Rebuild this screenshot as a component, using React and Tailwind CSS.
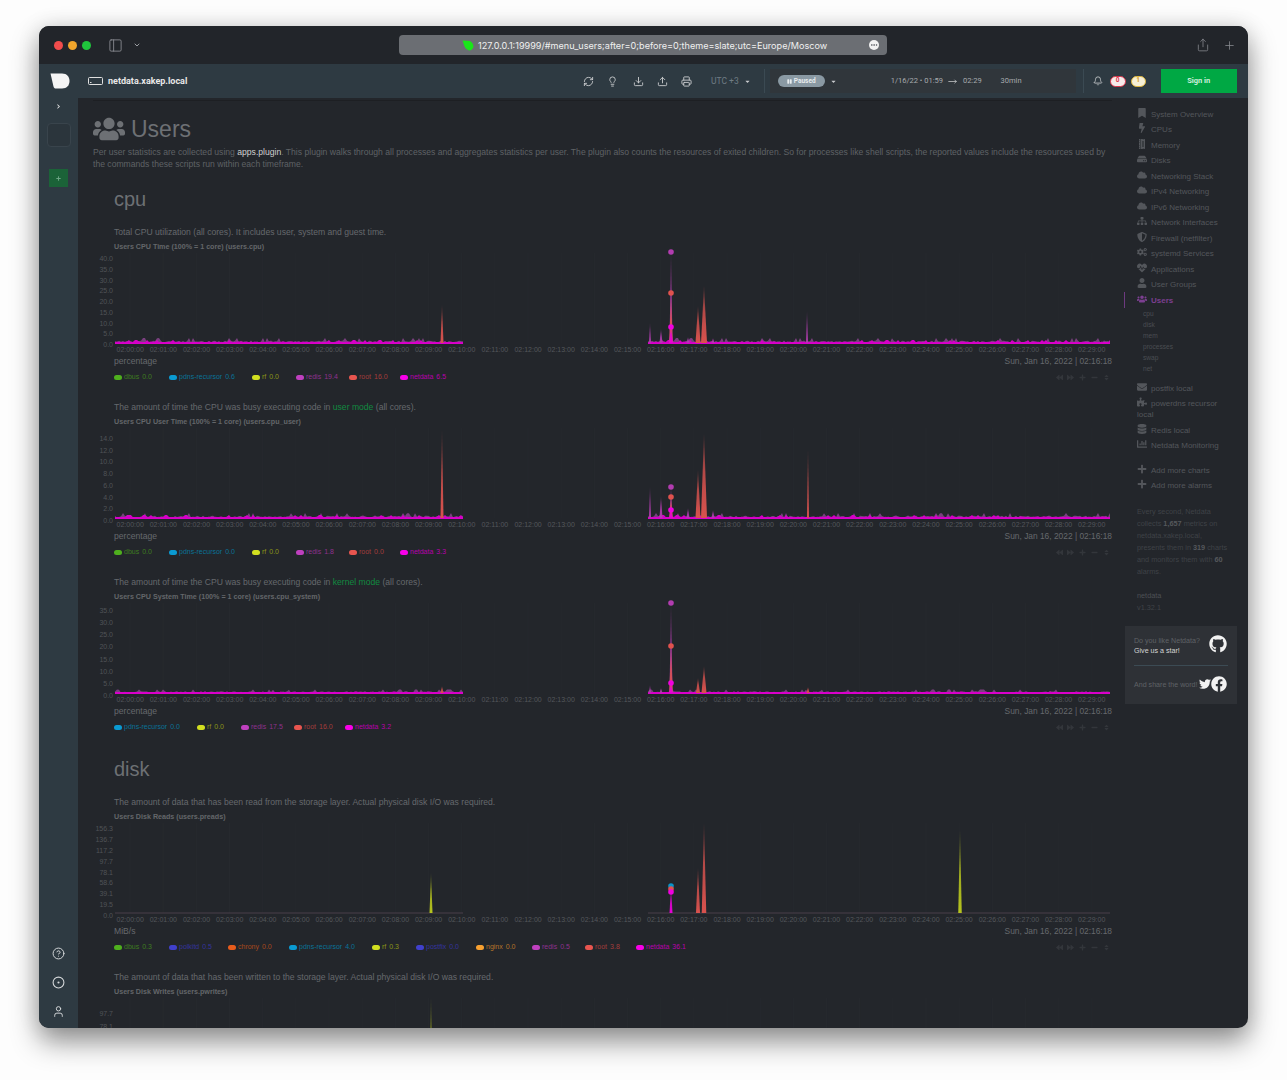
import React from "react";
import { PanelLeft, ChevronDown, Share, Plus, RefreshCw, Lightbulb, Download, Upload, Printer, Bell, MoveRight, CircleHelp, CircleDot, User, Ellipsis } from "lucide-react";
import { FaBookmark, FaBolt, FaMemory, FaHdd, FaCloud, FaSitemap, FaShieldAlt, FaCogs, FaHeartbeat, FaUser, FaUsers, FaEnvelope, FaPuzzlePiece, FaDatabase, FaChartBar, FaPlus, FaMinus, FaGithub, FaTwitter, FaFacebook, FaBackward, FaForward, FaSort, FaPause, FaCaretDown, FaChevronRight } from "react-icons/fa";

const L = {
  dbus: ["#4fb01e", "#3f7d20", 55],
  pdns: ["#0a9ad2", "#0a7298", 83],
  rf: ["#d2df20", "#8c9518", 44],
  redis: ["#bf40bf", "#8f318f", 53],
  root: ["#e8554f", "#a33d3b", 51],
  netdata: ["#f800e8", "#b800ac", 60],
  polkitd: ["#4040cc", "#34349f", 59],
  chrony: ["#e85c1c", "#a8481c", 61],
  postfix: ["#4040cc", "#34349f", 60],
  nginx: ["#f8a030", "#b5742a", 56],
};
const NAME = { pdns: "pdns-recursor" };
const TIMES = Array.from({ length: 30 }, (_, i) => `02:${String(i).padStart(2, "0")}:00`);
const GRAD = { r: "#d9524e", p: "#b23cb0", y: "#b6c41e", m: "#e800d8" };

function noisePath(seed, x0, x1, base, amp) {
  let s = seed;
  const pts = [`${x0},${base}`];
  for (let x = x0; x <= x1; x += 2) {
    s = (s * 1103515245 + 12345) & 0x7fffffff;
    const r = (s >> 8) % 100;
    const h = 0.8 + (r / 100) * amp + (r > 88 ? amp : 0);
    pts.push(`${x},${(base - h).toFixed(1)}`);
  }
  pts.push(`${x1},${base}`);
  return pts.join(" ");
}

function Plot({ id, top, base, amp, spikes, dots, height = 92 }) {
  const b = base - top;
  return (
    <svg width="995" height={height} viewBox={`0 0 995 ${height}`} className="block shrink-0 overflow-visible">
      <defs>
        {Object.entries(GRAD).map(([k, c]) => (
          <linearGradient key={k} id={`${id}${k}`} x1="0" y1="0" x2="0" y2="1">
            <stop offset="0" stopColor={c} stopOpacity="0.25" />
            <stop offset="0.45" stopColor={c} stopOpacity="0.8" />
            <stop offset="1" stopColor={c} stopOpacity="1" />
          </linearGradient>
        ))}
      </defs>
      {TIMES.map((_, i) => (
        <line key={i} x1={15 + i * 33.17} x2={15 + i * 33.17} y1="0" y2={b} stroke="#26292e" strokeWidth="1" />
      ))}
      {amp > 0.2 ? (
        <>
          <polygon points={noisePath(id.length * 97 + top, 0, 348, b + 0.5, amp + 1)} fill="#7a3f7f" />
          <polygon points={noisePath(id.length * 97 + top, 533, 995, b + 0.5, amp + 1)} fill="#7a3f7f" />
        </>
      ) : null}
      <line x1="0" x2="348" y1={b} y2={b} stroke={amp > 0.2 ? "#e000d0" : "#4b3f4b"} strokeWidth={amp > 0.2 ? 2 : 1} />
      <line x1="533" x2="995" y1={b} y2={b} stroke={amp > 0.2 ? "#e000d0" : "#4b3f4b"} strokeWidth={amp > 0.2 ? 2 : 1} />
      {amp > 0.2 ? (
        <>
          <polygon points={noisePath(top * 3 + 11, 0, 348, b + 0.5, amp)} fill="#d400c6" />
          <polygon points={noisePath(top * 3 + 11, 533, 995, b + 0.5, amp)} fill="#d400c6" />
        </>
      ) : null}
      {spikes.map(([x, t, w, c], i) => (
        <polygon key={i} points={`${x - 115 - w / 2},${b} ${x - 115},${t - top} ${x - 115 + w / 2},${b}`} fill={`url(#${id}${c})`} />
      ))}
      {dots.map(([x, y, c], i) => (
        <circle key={i} cx={x - 115} cy={y - top} r="2.8" fill={c} />
      ))}
    </svg>
  );
}

function Chart({ id, desc, title, labels, first, step, unit, legend, base, amp, spikes, dots = [], plotH = 92, cut }) {
  return (
    <section className="h-[175px] w-[998px] shrink-0 flex flex-col">
      <p className="h-[12px] leading-[12px] text-[8.6px] text-[#66696d] whitespace-nowrap">{desc}</p>
      <h4 className="mt-[4px] h-[11px] leading-[11px] text-[7.15px] font-bold text-[#63666a] whitespace-nowrap">{title}</h4>
      <div className="flex shrink-0 -ml-[19px]">
        <div className="w-[18px] mr-[2px] shrink-0 text-right text-[7px] text-[#505357]" style={{ paddingTop: first - 4, height: plotH }}>
          {labels.map((t) => (
            <div key={t} className="leading-[10px]" style={{ height: step }}>{t}</div>
          ))}
        </div>
        <div className="relative">
          <Plot id={id} top={spikes.top} base={base} amp={amp} spikes={spikes.list} dots={dots} height={plotH} />
        </div>
      </div>
      {cut ? null : (
        <>
          <div className="flex h-[10px] shrink-0 -ml-[0.4px]">
            {TIMES.map((t) => (
              <span key={t} className="w-[33.17px] shrink-0 text-center leading-[10px] text-[7px] text-[#54575b] whitespace-nowrap">{t}</span>
            ))}
          </div>
          <div className="flex justify-between h-[11px] leading-[13px] text-[#66696d]">
            <span className="text-[8.6px]">{unit}</span>
            <span className="text-[8.4px]">Sun, Jan 16, 2022 | 02:16:18</span>
          </div>
          <div className="mt-[6px] h-[10px] flex items-center justify-between pr-[2px]">
            <div className="flex items-center">
              {legend.map(([k, v]) => (
                <span key={k} className="flex items-center text-[7px] leading-[10px] whitespace-nowrap" style={{ width: L[k][2] }}>
                  <span className="w-[8px] h-[5px] rounded-full mr-[2px]" style={{ backgroundColor: L[k][0] }} />
                  <span style={{ color: L[k][1] }}>{NAME[k] || k}</span>
                  <span className="ml-[3px]" style={{ color: L[k][1] }}>{v}</span>
                </span>
              ))}
            </div>
            <div className="flex items-center gap-[4px] text-[#33363b] text-[7px]">
              <FaBackward /><FaForward /><FaPlus className="ml-[1px]" /><FaMinus className="ml-[1px]" /><FaSort className="ml-[1px]" />
            </div>
          </div>
        </>
      )}
    </section>
  );
}

const NAV = [
  [FaBookmark, "System Overview"], [FaBolt, "CPUs"], [FaMemory, "Memory", "rotate-90"], [FaHdd, "Disks"],
  [FaCloud, "Networking Stack"], [FaCloud, "IPv4 Networking"], [FaCloud, "IPv6 Networking"], [FaSitemap, "Network Interfaces"],
  [FaShieldAlt, "Firewall (netfilter)"], [FaCogs, "systemd Services"], [FaHeartbeat, "Applications"], [FaUser, "User Groups"],
];

function NavItem({ Icon, text, cls = "" }) {
  return (
    <div className="leading-[11px] py-[1.75px] pl-[13px] pr-[8px]">
      <span className="inline-block w-[14px] align-[-1px]"><Icon className={`text-[10px] text-[#53565b] ${cls}`} /></span>
      {text}
    </div>
  );
}

export default function App() {
  return (
    <div className="h-[1080px] w-[1287px] overflow-hidden bg-[#fdfdfd] pt-[26px] pl-[39px] font-['Liberation_Sans',sans-serif]">
      <div className="w-[1209px] h-[1002px] rounded-[10px] overflow-hidden flex flex-col bg-[#23262b] shadow-[0_14px_28px_rgba(0,0,0,0.42),0_0_22px_rgba(0,0,0,0.12)]">
        {/* title bar */}
        <div className="h-[38px] shrink-0 bg-[#22252a] flex items-center relative">
          <span className="ml-[15px] w-[9px] h-[9px] rounded-full bg-[#f14c4c]" />
          <span className="ml-[5px] w-[9px] h-[9px] rounded-full bg-[#f0a52c]" />
          <span className="ml-[5px] w-[9px] h-[9px] rounded-full bg-[#1fc63c]" />
          <PanelLeft className="ml-[17px] text-[#8b8e92]" size={15} strokeWidth={1.4} />
          <ChevronDown className="ml-[10px] text-[#9a9da1]" size={8} strokeWidth={3} />
          <div className="ml-[258px] w-[488px] h-[20px] rounded-[4px] bg-[#6b6e73] flex items-center">
            <svg width="12" height="11" viewBox="0 0 12 11" className="ml-[63px]">
              <path d="M0.5 0.5 L8 1 Q11.5 3 11.5 7 Q10 10.5 7 10.5 Q3 9 2 5 Z" fill="#19e619" />
            </svg>
            <span className="ml-[4px] pt-[1px] text-[9.1px] text-[#f0f0f0] font-['Inter',sans-serif] whitespace-nowrap">127.0.0.1:19999/#menu_users;after=0;before=0;theme=slate;utc=Europe/Moscow</span>
            <span className="ml-auto mr-[8px] w-[10px] h-[10px] rounded-full bg-[#f2f2f2] flex items-center justify-center">
              <Ellipsis size={8} strokeWidth={3} className="text-[#6b6e73]" />
            </span>
          </div>
          <Share className="ml-[309px] text-[#8b8e92]" size={14} strokeWidth={1.3} />
          <Plus className="ml-[13px] text-[#8b8e92]" size={13} strokeWidth={1.4} />
        </div>

        {/* header */}
        <div className="h-[34px] shrink-0 bg-[#2e3a42] flex items-center font-['Roboto',sans-serif]">
          <div className="w-[537px] flex items-center shrink-0">
            <svg width="20" height="16" viewBox="0 0 20 16" className="ml-[11px] shrink-0">
              <path d="M0.5 0.5 H12 C17 0.5 19.5 4 19.5 8 C19.5 12 17 15.5 12 15.5 H6 C4.5 15.5 4 15 3.5 13.5 Z" fill="#f5f5f5" />
            </svg>
            <svg width="15" height="8" viewBox="0 0 15 8" fill="none" className="ml-[18px] shrink-0">
              <rect x="0.5" y="0.5" width="14" height="7" rx="1" stroke="#e0e0e0" />
              <rect x="2" y="5" width="1.5" height="1" fill="#e0e0e0" />
            </svg>
            <span className="ml-[5px] pt-[1px] text-[9px] font-bold text-[#e8e8e8] whitespace-nowrap">netdata.xakep.local</span>
          </div>
          <div className="flex items-center text-[#c9ccce]">
            <span className="w-[24px] flex justify-center"><RefreshCw size={11} strokeWidth={2} /></span>
            <span className="w-[24px] flex justify-center"><Lightbulb size={11} strokeWidth={2} /></span>
            <span className="ml-[2px] w-[24px] flex justify-center"><Download size={11} strokeWidth={2} /></span>
            <span className="w-[24px] flex justify-center"><Upload size={11} strokeWidth={2} /></span>
            <span className="w-[24px] flex justify-center"><Printer size={11} strokeWidth={2} /></span>
          </div>
          <span className="ml-[13px] text-[8.5px] text-[#6f7c84] whitespace-nowrap">UTC +3</span>
          <FaCaretDown className="ml-[5px] text-[7px] text-[#c9ccce]" />
          <span className="ml-[13px] w-px h-[24px] bg-[#3b4a53]" />
          <div className="ml-[5px] w-[306px] h-[24px] bg-[#30363b] flex items-center shrink-0">
            <span className="ml-[8px] w-[47px] h-[12px] rounded-full bg-[#8a99a3] flex items-center justify-center gap-[2px] text-[6.5px] leading-[12px] font-bold text-[#e8ecee]">
              <FaPause className="text-[5px]" />Paused
            </span>
            <FaCaretDown className="ml-[5px] text-[7px] text-[#c9ccce]" />
            <span className="ml-[54px] text-[7.5px] text-[#a7abae] whitespace-nowrap">1/16/22 • 01:59</span>
            <MoveRight className="ml-[5px] text-[#c9ccce]" size={9} strokeWidth={2} />
            <span className="ml-[6px] text-[7.5px] text-[#a7abae]">02:29</span>
            <span className="ml-[19px] text-[7.5px] text-[#a7abae]">30min</span>
          </div>
          <span className="ml-[7px] w-px h-[24px] bg-[#3b4a53]" />
          <Bell className="ml-[9px] text-[#c9ccce]" size={10} strokeWidth={2} />
          <span className="ml-[7px] w-[16px] h-[11px] rounded-full bg-[#f6eaea] border border-[#d9344a] flex items-center justify-center text-[6.5px] font-bold text-[#d9344a]">0</span>
          <span className="ml-[5px] w-[15px] h-[11px] rounded-full bg-[#f6efd6] border border-[#e0b83c] flex items-center justify-center text-[6.5px] font-bold text-[#d49a1c]">1</span>
          <span className="ml-[15px] w-[76px] h-[24px] bg-[#00a844] flex items-center justify-center text-[7.5px] font-bold text-[#cfeedd]">Sign in</span>
        </div>

        <div className="flex-1 min-h-0 flex">
          {/* left rail */}
          <aside className="w-[39px] shrink-0 bg-[#2e3a42] flex flex-col items-center">
            <FaChevronRight className="mt-[6px] text-[5px] text-[#e8e8e8]" />
            <div className="mt-[14px] w-[24px] h-[24px] rounded-[4px] border border-[#39444c] bg-[#2b353c]" />
            <div className="mt-[22px] w-[19px] h-[18px] bg-[#1b6338] flex items-center justify-center">
              <FaPlus className="text-[5px] text-[#6ea586]" />
            </div>
            <div className="mt-auto mb-[10px] flex flex-col items-center gap-[16px] text-[#d5d8da]">
              <CircleHelp size={13} strokeWidth={1.8} />
              <CircleDot size={13} strokeWidth={2} />
              <User size={13} strokeWidth={1.8} />
            </div>
          </aside>

          {/* content */}
          <main className="w-[1046px] shrink-0 overflow-hidden flex flex-col pl-[15px]">
            <div className="w-[1019px] h-[3px] shrink-0 border-b border-[#1d1f23]" />
            <div className="mt-[12px] h-[32px] flex items-center text-[#6d7074] shrink-0">
              <FaUsers className="text-[30px] w-[32px]" />
              <h1 className="ml-[6px] text-[23px] leading-[32px]">Users</h1>
            </div>
            <p className="mt-[1px] w-[1019px] text-[8.6px] leading-[12px] text-[#5f6266]">
              Per user statistics are collected using <span className="text-[#d0d0d0]">apps.plugin</span>. This plugin walks through all processes and aggregates statistics per user. The plugin also counts the resources of exited children. So for processes like shell scripts, the reported values include the resources used by the commands these scripts run within each timeframe.
            </p>
            <div className="pl-[21px] flex flex-col">
              <h2 className="mt-[19px] h-[27px] leading-[20px] text-[20px] text-[#6d7074] shrink-0">cpu</h2>
              <div className="h-[10px] shrink-0" />
              <Chart id="a" desc="Total CPU utilization (all cores). It includes user, system and guest time." title="Users CPU Time (100% = 1 core) (users.cpu)"
                labels={["40.0","35.0","30.0","25.0","20.0","15.0","10.0","5.0","0.0"]} first={5} step={10.75} unit="percentage" base={343} amp={1.4}
                legend={[["dbus","0.0"],["pdns","0.6"],["rf","0.0"],["redis","19.4"],["root","16.0"],["netdata","6.5"]]}
                spikes={{ top: 253, list: [[442,305,3,"r"],[650,323,2,"p"],[661,329,3,"p"],[671,252,3,"p"],[671,293,3.5,"r"],[671,327,4,"m"],[688,337,3,"p"],[698,306,5,"r"],[704,286,6,"r"],[807,311,2,"p"],[713,338,3,"p"]] }}
                dots={[[671,252,"#b23cb0"],[671,293,"#e0524e"],[671,327,"#f000e0"]]} />
              <Chart id="b" desc={<>The amount of time the CPU was busy executing code in <span className="text-[#118a40]">user mode</span> (all cores).</>} title="Users CPU User Time (100% = 1 core) (users.cpu_user)"
                labels={["14.0","12.0","10.0","8.0","6.0","4.0","2.0","0.0"]} first={10} step={11.71} unit="percentage" base={518} amp={1.4}
                legend={[["dbus","0.0"],["pdns","0.0"],["rf","0.0"],["redis","1.8"],["root","0.0"],["netdata","3.3"]]}
                spikes={{ top: 428, list: [[442,430,3,"r"],[650,487,2,"p"],[661,496,3,"p"],[671,487,3,"p"],[671,497,3.5,"r"],[671,510,4,"m"],[688,508,3,"p"],[698,470,5,"r"],[704,434,6,"r"],[808,449,2,"r"],[713,510,3,"p"]] }}
                dots={[[671,487,"#b23cb0"],[671,497,"#e0524e"],[671,510,"#f000e0"]]} />
              <Chart id="c" desc={<>The amount of time the CPU was busy executing code in <span className="text-[#118a40]">kernel mode</span> (all cores).</>} title="Users CPU System Time (100% = 1 core) (users.cpu_system)"
                labels={["35.0","30.0","25.0","20.0","15.0","10.0","5.0","0.0"]} first={7} step={12.14} unit="percentage" base={693} amp={0.6}
                legend={[["pdns","0.0"],["rf","0.0"],["redis","17.5"],["root","16.0"],["netdata","3.2"]]}
                spikes={{ top: 603, list: [[442,686,3,"r"],[650,685,2,"p"],[661,688,3,"p"],[671,603,3,"p"],[671,646,3.5,"r"],[671,683,4,"m"],[698,678,4,"r"],[704,666,5,"r"],[808,687,3,"r"]] }}
                dots={[[671,603,"#b23cb0"],[671,646,"#e0524e"],[671,683,"#f000e0"]]} />
              <h2 className="mt-[7px] h-[27px] leading-[22px] text-[20px] text-[#6d7074] shrink-0">disk</h2>
              <div className="h-[11px] shrink-0" />
              <Chart id="d" desc="The amount of data that has been read from the storage layer. Actual physical disk I/O was required." title="Users Disk Reads (users.preads)"
                labels={["156.3","136.7","117.2","97.7","78.1","58.6","39.1","19.5","0.0"]} first={5} step={10.875} unit="MiB/s" base={913} amp={0}
                legend={[["dbus","0.3"],["polkitd","0.5"],["chrony","0.0"],["pdns","4.0"],["rf","0.3"],["postfix","0.0"],["nginx","0.0"],["redis","0.5"],["root","3.8"],["netdata","36.1"]]}
                spikes={{ top: 823, list: [[431,873,3,"y"],[671,887,3,"m"],[698,868,4,"r"],[704,823,4.5,"r"],[960,830,3.5,"y"]] }}
                dots={[[671,886,"#0a93c8"],[671,889,"#e0524e"],[671,892,"#f000e0"]]} />
              <Chart id="e" cut desc="The amount of data that has been written to the storage layer. Actual physical disk I/O was required." title="Users Disk Writes (users.pwrites)"
                labels={["97.7","78.1"]} first={15} step={13} unit="MiB/s" base={1088} amp={0} plotH={92} legend={[]}
                spikes={{ top: 998, list: [[431,998,3,"y"]] }} />
            </div>
          </main>

          {/* right nav */}
          <nav className="w-[113px] shrink-0 text-[8px] text-[#53565b] pt-[8px]">
            {NAV.map(([I, t, c]) => <NavItem key={t} Icon={I} text={t} cls={c} />)}
            <div className="border-l border-[#6d3a80] text-[#7c3f91]">
              <div className="leading-[11px] py-[1.75px] pl-[12px] font-bold">
                <span className="inline-block w-[14px] align-[-1px]"><FaUsers className="text-[10px]" /></span>Users
              </div>
            </div>
            <div className="pl-[19px] pb-[7px] text-[6.6px] text-[#4a4d52]">
              {["cpu","disk","mem","processes","swap","net"].map((t) => <div key={t} className="h-[11px] leading-[11px]">{t}</div>)}
            </div>
            <NavItem Icon={FaEnvelope} text="postfix local" />
            <div className="-mt-[0.5px]"><NavItem Icon={FaPuzzlePiece} text="powerdns recursor local" /></div>
            <NavItem Icon={FaDatabase} text="Redis local" />
            <NavItem Icon={FaChartBar} text="Netdata Monitoring" />
            <div className="h-[9px]" />
            <NavItem Icon={FaPlus} text="Add more charts" />
            <NavItem Icon={FaPlus} text="Add more alarms" />
            <p className="mt-[13px] pl-[13px] text-[7.3px] leading-[12.1px] text-[#3f4247] whitespace-nowrap">
              Every second, Netdata<br />collects <span className="font-bold text-[#55585c]">1,657</span> metrics on<br />netdata.xakep.local,<br />presents them in <span className="font-bold text-[#55585c]">319</span> charts<br />and monitors them with <span className="font-bold text-[#55585c]">60</span><br />alarms.
            </p>
            <p className="mt-[11px] pl-[13px] text-[7.3px] leading-[12px] text-[#3f4247]">
              <span className="text-[#4d5055]">netdata</span><br />v1.32.1
            </p>
            <div className="mt-[12px] ml-[1px] w-[112px] h-[78px] bg-[#2e3136] pl-[9px] pr-[10px] pt-[9px] flex flex-col">
              <div className="flex items-start justify-between h-[20px]">
                <div className="pt-[1px] text-[7.1px] leading-[10px] whitespace-nowrap text-[#5f6266]">
                  Do you like Netdata?<br /><span className="text-[#d5d5d5]">Give us a star!</span>
                </div>
                <FaGithub className="text-[18px] text-[#f2f2f2]" />
              </div>
              <div className="mt-[10px] h-px bg-[#3c4b54] -mr-[1px]" />
              <div className="mt-[10px] flex items-center justify-between">
                <span className="pt-[3px] text-[7.1px] text-[#5f6266] whitespace-nowrap">And share the word!</span>
                <span className="flex items-center">
                  <FaTwitter className="text-[12px] text-[#f2f2f2] -ml-[4px]" />
                  <FaFacebook className="text-[16px] text-[#f2f2f2]" />
                </span>
              </div>
            </div>
          </nav>
        </div>
      </div>
    </div>
  );
}
